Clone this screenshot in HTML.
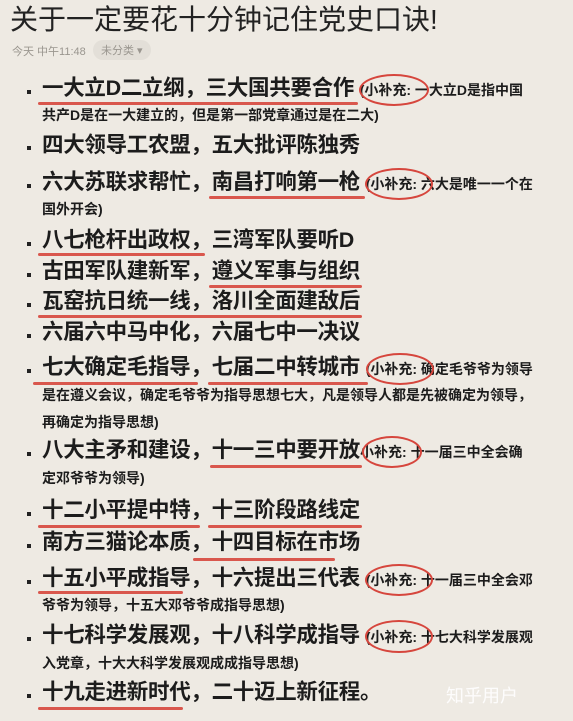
<!DOCTYPE html>
<html><head><meta charset="utf-8"><style>
body{margin:0;width:573px;height:721px;background:#eeeae3;position:relative;overflow:hidden;font-family:"Liberation Sans","Noto Sans CJK SC",sans-serif;color:#1c1c1c}
.a{position:absolute;white-space:nowrap}
.t{left:10px;top:3px;font-size:28px;line-height:34px;color:#222}
.m{left:12px;top:43px;font-size:11px;color:#9a968f}
.tag{left:93px;top:40px;font-size:11px;color:#9a968f;background:#e3dfd8;border-radius:10px;padding:2px 8px}
.L{left:42px;font-size:21.5px;font-weight:bold;line-height:24px;letter-spacing:-0.3px}
.b{left:27px;width:4px;height:4px;background:#222}
.s{font-size:14px;font-weight:bold;line-height:16px;letter-spacing:0}
.S{left:42px;font-size:14px;font-weight:bold;line-height:16px}
.u{height:3px;background:#d9574d;border-radius:2px}
.c{border:2px solid #d6463d;border-radius:50%}
</style></head><body>
<div class="a t">关于一定要花十分钟记住党史口诀!</div>
<div class="a m">今天 中午11:48</div>
<div class="a tag">未分类 ▾</div>

<div class="a b" style="top:90px"></div>
<div class="a L" style="top:76px">一大立D二立纲，三大国共要合作 <span class="s">(小补充: 一大立D是指中国</span></div>
<div class="a S" style="top:107px">共产D是在一大建立的，但是第一部党章通过是在二大)</div>
<div class="a b" style="top:146px"></div>
<div class="a L" style="top:133px">四大领导工农盟，五大批评陈独秀</div>
<div class="a b" style="top:184px"></div>
<div class="a L" style="top:170px">六大苏联求帮忙，南昌打响第一枪 <span class="s">(小补充: 六大是唯一一个在</span></div>
<div class="a S" style="top:201px">国外开会)</div>
<div class="a b" style="top:242px"></div>
<div class="a L" style="top:228px">八七枪杆出政权，三湾军队要听D</div>
<div class="a b" style="top:273px"></div>
<div class="a L" style="top:259px">古田军队建新军，遵义军事与组织</div>
<div class="a b" style="top:303px"></div>
<div class="a L" style="top:289px">瓦窑抗日统一线，洛川全面建敌后</div>
<div class="a b" style="top:334px"></div>
<div class="a L" style="top:320px">六届六中马中化，六届七中一决议</div>
<div class="a b" style="top:369px"></div>
<div class="a L" style="top:355px">七大确定毛指导，七届二中转城市 <span class="s">(小补充: 确定毛爷爷为领导</span></div>
<div class="a S" style="top:387px">是在遵义会议，确定毛爷爷为指导思想七大，凡是领导人都是先被确定为领导，</div>
<div class="a S" style="top:414px">再确定为指导思想)</div>
<div class="a b" style="top:452px"></div>
<div class="a L" style="top:438px">八大主矛和建设，十一三中要开放<span class="s">小补充: 十一届三中全会确</span></div>
<div class="a S" style="top:470px">定邓爷爷为领导)</div>
<div class="a b" style="top:512px"></div>
<div class="a L" style="top:498px">十二小平提中特，十三阶段路线定</div>
<div class="a b" style="top:544px"></div>
<div class="a L" style="top:530px">南方三猫论本质，十四目标在市场</div>
<div class="a b" style="top:580px"></div>
<div class="a L" style="top:566px">十五小平成指导，十六提出三代表 <span class="s">(小补充: 十一届三中全会邓</span></div>
<div class="a S" style="top:597px">爷爷为领导，十五大邓爷爷成指导思想)</div>
<div class="a b" style="top:637px"></div>
<div class="a L" style="top:623px">十七科学发展观，十八科学成指导 <span class="s">(小补充: 十七大科学发展观</span></div>
<div class="a S" style="top:655px">入党章，十大大科学发展观成成指导思想)</div>
<div class="a b" style="top:694px"></div>
<div class="a L" style="top:680px">十九走进新时代，二十迈上新征程。</div>
<div class="a" style="left:446px;top:682px;font-size:18px;color:#fff;opacity:.9">知乎用户</div>

<div class="a u" style="left:38px;top:102px;width:320px"></div>
<div class="a u" style="left:209px;top:196px;width:156px"></div>
<div class="a u" style="left:38px;top:253px;width:167px"></div>
<div class="a u" style="left:209px;top:285px;width:153px"></div>
<div class="a u" style="left:38px;top:315px;width:324px"></div>
<div class="a u" style="left:33px;top:382px;width:165px"></div>
<div class="a u" style="left:208px;top:382px;width:160px"></div>
<div class="a u" style="left:210px;top:465px;width:152px"></div>
<div class="a u" style="left:38px;top:525px;width:162px"></div>
<div class="a u" style="left:208px;top:525px;width:154px"></div>
<div class="a u" style="left:193px;top:558px;width:142px"></div>
<div class="a u" style="left:38px;top:591px;width:145px"></div>
<div class="a u" style="left:38px;top:707px;width:145px"></div>

<div class="a c" style="left:359px;top:74px;width:66px;height:28px"></div>
<div class="a c" style="left:365px;top:168px;width:64px;height:28px"></div>
<div class="a c" style="left:366px;top:353px;width:64px;height:28px"></div>
<div class="a c" style="left:362px;top:436px;width:56px;height:28px"></div>
<div class="a c" style="left:365px;top:564px;width:64px;height:28px"></div>
<div class="a c" style="left:365px;top:620px;width:64px;height:29px"></div>
</body></html>
